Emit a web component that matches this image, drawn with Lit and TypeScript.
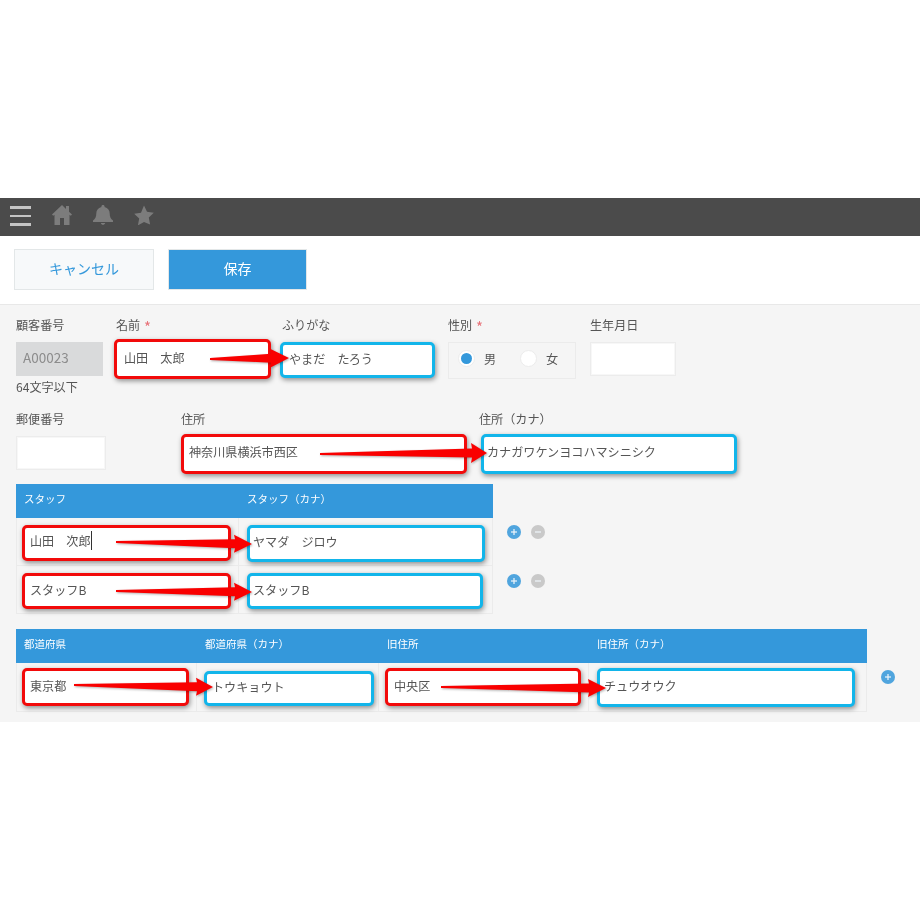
import { LitElement, html, css, svg } from "lit";
import { customElement } from "lit/decorators.js";

const arrow = (x1: number, y1: number, x2: number, y2: number, h: number, s: number, w: number) => {
  const bx = x2 - h;
  const by = y2 - ((y2 - y1) * h) / (x2 - x1);
  const pts = `${x1},${y1 - 0.9} ${bx + 1},${by - s} ${bx},${by - w} ${x2},${y2} ${bx},${by + w} ${bx + 1},${by + s} ${x1},${y1 + 0.9}`;
  return svg`<polygon class="arrow" points=${pts}></polygon>`;
};

@customElement("app-root")
export class AppRoot extends LitElement {
  static styles = css`
    :host { display: block; position: relative; width: 920px; height: 920px; background: #fff; overflow: hidden;
      font-family: "Noto Sans CJK JP", "Noto Sans", sans-serif; font-size: 12.1px; color: #555; filter: blur(0.35px); }
    .spacer { height: 198px; }
    .topbar { height: 38px; background: #4b4b4b; display: flex; align-items: center; padding: 0 0 4px 10px; box-sizing: border-box; gap: 19px; }
    .topbar svg { display: block; }
    .burger { width: 21px; display: flex; flex-direction: column; gap: 6px; margin: 2px 1px 0 0; }
    .burger i { display: block; height: 2.500px; background: #c4c4c4; }
    .star { margin-left: 1px; }
    .actions { height: 68px; display: flex; align-items: center; box-sizing: border-box; padding: 0 0 2px 14px; gap: 14px; }
    .btn { width: 140px; height: 41px; box-sizing: border-box; display: flex; align-items: center; justify-content: center; font-size: 14px; padding-bottom: 2px; }
    .cancel { background: #f7f9fa; border: 1px solid #e3e7e8; color: #3498db; }
    .save { width: 139px; background: #3498db; border: 1px solid #e3e7e8; color: #fff; }
    .form { background: #f5f5f5; border-top: 1px solid #e8e8e8; box-sizing: border-box; height: 418px; padding: 11px 0 0 16px; }
    .row1 { display: grid; grid-template-columns: 99px 166px 167px 142px 86px; height: 94px; }
    .row2 { display: grid; grid-template-columns: 165px 298px 260px; height: 74px; }
    .label { height: 18px; line-height: 18px; margin-bottom: 8px; white-space: nowrap; }
    .lb1 { padding-left: 1px; }
    .req { color: #e8737a; margin-left: 1px; font-size: 15px; line-height: 0; vertical-align: -3px; }
    .input { box-sizing: border-box; background: #fff; height: 34px; display: flex; align-items: center; padding: 0 0 4px 9px; white-space: pre; }
    .plain { border: 1px solid #ececec; box-shadow: inset 0 0 0 1px #f7f7f7; }
    .ro { background: #d9dadb; color: #8c8c8c; font-size: 13.500px; width: 87px; padding-left: 7px; }
    .note { margin-top: 2px; line-height: 18px; }
    .red, .blue { box-sizing: border-box; background: #fff; display: flex; align-items: center; white-space: pre; border-radius: 5px; box-shadow: 1px 2px 5px rgba(0, 0, 0, .42); padding-bottom: 3px; }
    .red { border: 3px solid #f20a0a; padding-left: 6px; }
    .blue { border: 3px solid #12b5ea; padding-left: 3px; }
    .name { width: 157px; height: 40px; margin: -3px 0 0 -1px; padding-left: 7px; }
    .kana { width: 155px; height: 36px; margin: 1px 0 0 -1px; padding-left: 6px; }
    .gender { width: 128px; height: 37px; box-sizing: border-box; border: 1px solid #ebebeb; display: flex; align-items: center; padding: 0 0 4px 9px; }
    .radio { width: 17px; height: 17px; border-radius: 50%; box-sizing: border-box; background: #fff; border: 1px solid #ececec; display: flex; align-items: center; justify-content: center; }
    .radio i { display: block; width: 11px; height: 11px; border-radius: 50%; background: #3498db; }
    .r1 { margin-right: 9px; }
    .r2 { margin: 0 9px 0 24px; }
    .birth { width: 86px; }
    .zip { width: 90px; }
    .addr { width: 286px; height: 40px; margin: -2px 0 0 0; padding: 0 0 5px 5px; }
    .addrk { width: 256px; height: 40px; margin: -2px 0 0 2px; padding-bottom: 5px; }
    .table { display: grid; }
    .t1 { grid-template-columns: 223px 254px 1fr; width: 904px; }
    .t2 { grid-template-columns: 181px 182px 210px 278px 1fr; margin-top: 15px; width: 904px; }
    .th { height: 34px; background: #3498db; color: #fff; font-size: 10.500px; display: flex; align-items: center; padding: 0 0 5px 8px; box-sizing: border-box; }
    .td { box-sizing: border-box; border: 1px solid #ebebeb; border-width: 0 1px 1px 0; display: flex; padding: 7px 0 0 6px; }
    .first { border-left-width: 1px; padding-left: 5px; }
    .t1 .td { height: 48px; }
    .t2 .td { height: 49px; padding-top: 5px; }
    .s1 { width: 209px; height: 36px; padding-left: 5px; }
    .s1a { padding-bottom: 5px; }
    .s2 { width: 238px; height: 37px; margin-left: 2px; padding: 0 0 5px 3px; }
    .s3 { width: 236px; height: 36px; margin-left: 2px; padding-left: 3px; }
    .p1 { width: 167px; height: 38px; padding-left: 5px; }
    .p2 { width: 170px; height: 35px; margin: 3px 0 0 1px; padding: 0 0 5px 5px; }
    .p3 { width: 196px; height: 38px; }
    .p4 { width: 258px; height: 39px; margin-left: 2px; padding: 0 0 5px 4px; }
    .ops { display: flex; gap: 10px; padding: 7px 0 0 14px; }
    .opsb { padding-top: 8px; }
    .op { width: 14px; height: 14px; display: block; }
    .overlay { position: absolute; left: 0; top: 0; width: 920px; height: 920px; pointer-events: none; }
    .arrow { fill: #f90000; filter: drop-shadow(1px 1px 1px rgba(0, 0, 0, .3)); }
    .caret { display: inline-block; width: 1px; height: 19px; background: #333; margin-left: 1px; }
  `;

  private op(kind: "plus" | "minus") {
    const fill = kind === "plus" ? "#50a5de" : "#c9c9c9";
    return html`<svg class="op" viewBox="0 0 14 14">
      <circle cx="7" cy="7" r="7" fill=${fill}></circle>
      <rect x="4" y="6.400" width="6" height="1.200" fill="#eef6fb"></rect>
      ${kind === "plus" ? svg`<rect x="6.400" y="4" width="1.200" height="6" fill="#eef6fb"></rect>` : ""}
    </svg>`;
  }

  render() {
    return html`
      <div class="spacer"></div>
      <div class="topbar">
        <div class="burger"><i></i><i></i><i></i></div>
        <svg width="22" height="22" viewBox="0 0 22 22"><path fill="#7c7c7c" d="M11 1 1 10.500 2.200 11.800 3.500 10.700V21H9V14h4v7h5.500V10.700l1.300 1.100L21 10.500 18 7.700V2h-3v2.900z"></path></svg>
        <svg width="22" height="22" viewBox="0 0 22 22"><path fill="#7c7c7c" d="M11 1c-1 0-1.600.7-1.600 1.500v.4C6 3.700 4.300 6.300 4.300 9.500c0 3.500-1.100 5.400-3.300 7v1.500h20v-1.500c-2.200-1.600-3.300-3.500-3.300-7 0-3.200-1.700-5.800-5.100-6.600v-.4C12.600 1.700 12 1 11 1zM8.800 19c.3 1.100 1.100 1.800 2.200 1.800s1.900-.7 2.200-1.800z"></path></svg>
        <svg class="star" width="20" height="20" viewBox="0 0 20 20"><path fill="#7c7c7c" d="M10 .5l3 6.300 6.800.9-5 4.800 1.300 6.900L10 17.100l-6.100 3.300 1.300-6.900-5-4.800 6.800-.9z"></path></svg>
      </div>
      <div class="actions">
        <div class="btn cancel">キャンセル</div>
        <div class="btn save">保存</div>
      </div>
      <div class="form">
        <div class="row1">
          <div>
            <div class="label">顧客番号</div>
            <div class="input ro">A00023</div>
            <div class="note">64文字以下</div>
          </div>
          <div>
            <div class="label lb1">名前 <span class="req">*</span></div>
            <div class="red name">山田　太郎</div>
          </div>
          <div>
            <div class="label lb1">ふりがな</div>
            <div class="blue kana">やまだ　たろう</div>
          </div>
          <div>
            <div class="label">性別 <span class="req">*</span></div>
            <div class="gender">
              <span class="radio r1"><i></i></span>男
              <span class="radio r2"></span>女
            </div>
          </div>
          <div>
            <div class="label">生年月日</div>
            <div class="input plain birth"></div>
          </div>
        </div>
        <div class="row2">
          <div>
            <div class="label">郵便番号</div>
            <div class="input plain zip"></div>
          </div>
          <div>
            <div class="label">住所</div>
            <div class="red addr">神奈川県横浜市西区</div>
          </div>
          <div>
            <div class="label">住所（カナ）</div>
            <div class="blue addrk">カナガワケンヨコハマシニシク</div>
          </div>
        </div>
        <div class="table t1">
          <div class="th">スタッフ</div>
          <div class="th">スタッフ（カナ）</div>
          <div></div>
          <div class="td first"><div class="red s1 s1a">山田　次郎<span class="caret"></span></div></div>
          <div class="td"><div class="blue s2">ヤマダ　ジロウ</div></div>
          <div class="ops">${this.op("plus")}${this.op("minus")}</div>
          <div class="td first"><div class="red s1">スタッフB</div></div>
          <div class="td"><div class="blue s3">スタッフB</div></div>
          <div class="ops opsb">${this.op("plus")}${this.op("minus")}</div>
        </div>
        <div class="table t2">
          <div class="th">都道府県</div>
          <div class="th">都道府県（カナ）</div>
          <div class="th">旧住所</div>
          <div class="th">旧住所（カナ）</div>
          <div></div>
          <div class="td first"><div class="red p1">東京都</div></div>
          <div class="td"><div class="blue p2">トウキョウト</div></div>
          <div class="td"><div class="red p3">中央区</div></div>
          <div class="td"><div class="blue p4">チュウオウク</div></div>
          <div class="ops">${this.op("plus")}</div>
        </div>
      </div>
      <svg class="overlay" viewBox="0 0 920 920">
        ${arrow(210, 359, 289, 358, 19, 4.5, 9.5)}
        ${arrow(320, 454, 487, 453, 16, 4.5, 10)}
        ${arrow(116, 542, 252, 544, 18, 4.5, 9)}
        ${arrow(116, 591, 252, 592, 18, 4.5, 9)}
        ${arrow(74, 685, 213, 687, 17, 4.5, 9)}
        ${arrow(441, 687, 606, 688, 18, 4.5, 9)}
      </svg>
    `;
  }
}
